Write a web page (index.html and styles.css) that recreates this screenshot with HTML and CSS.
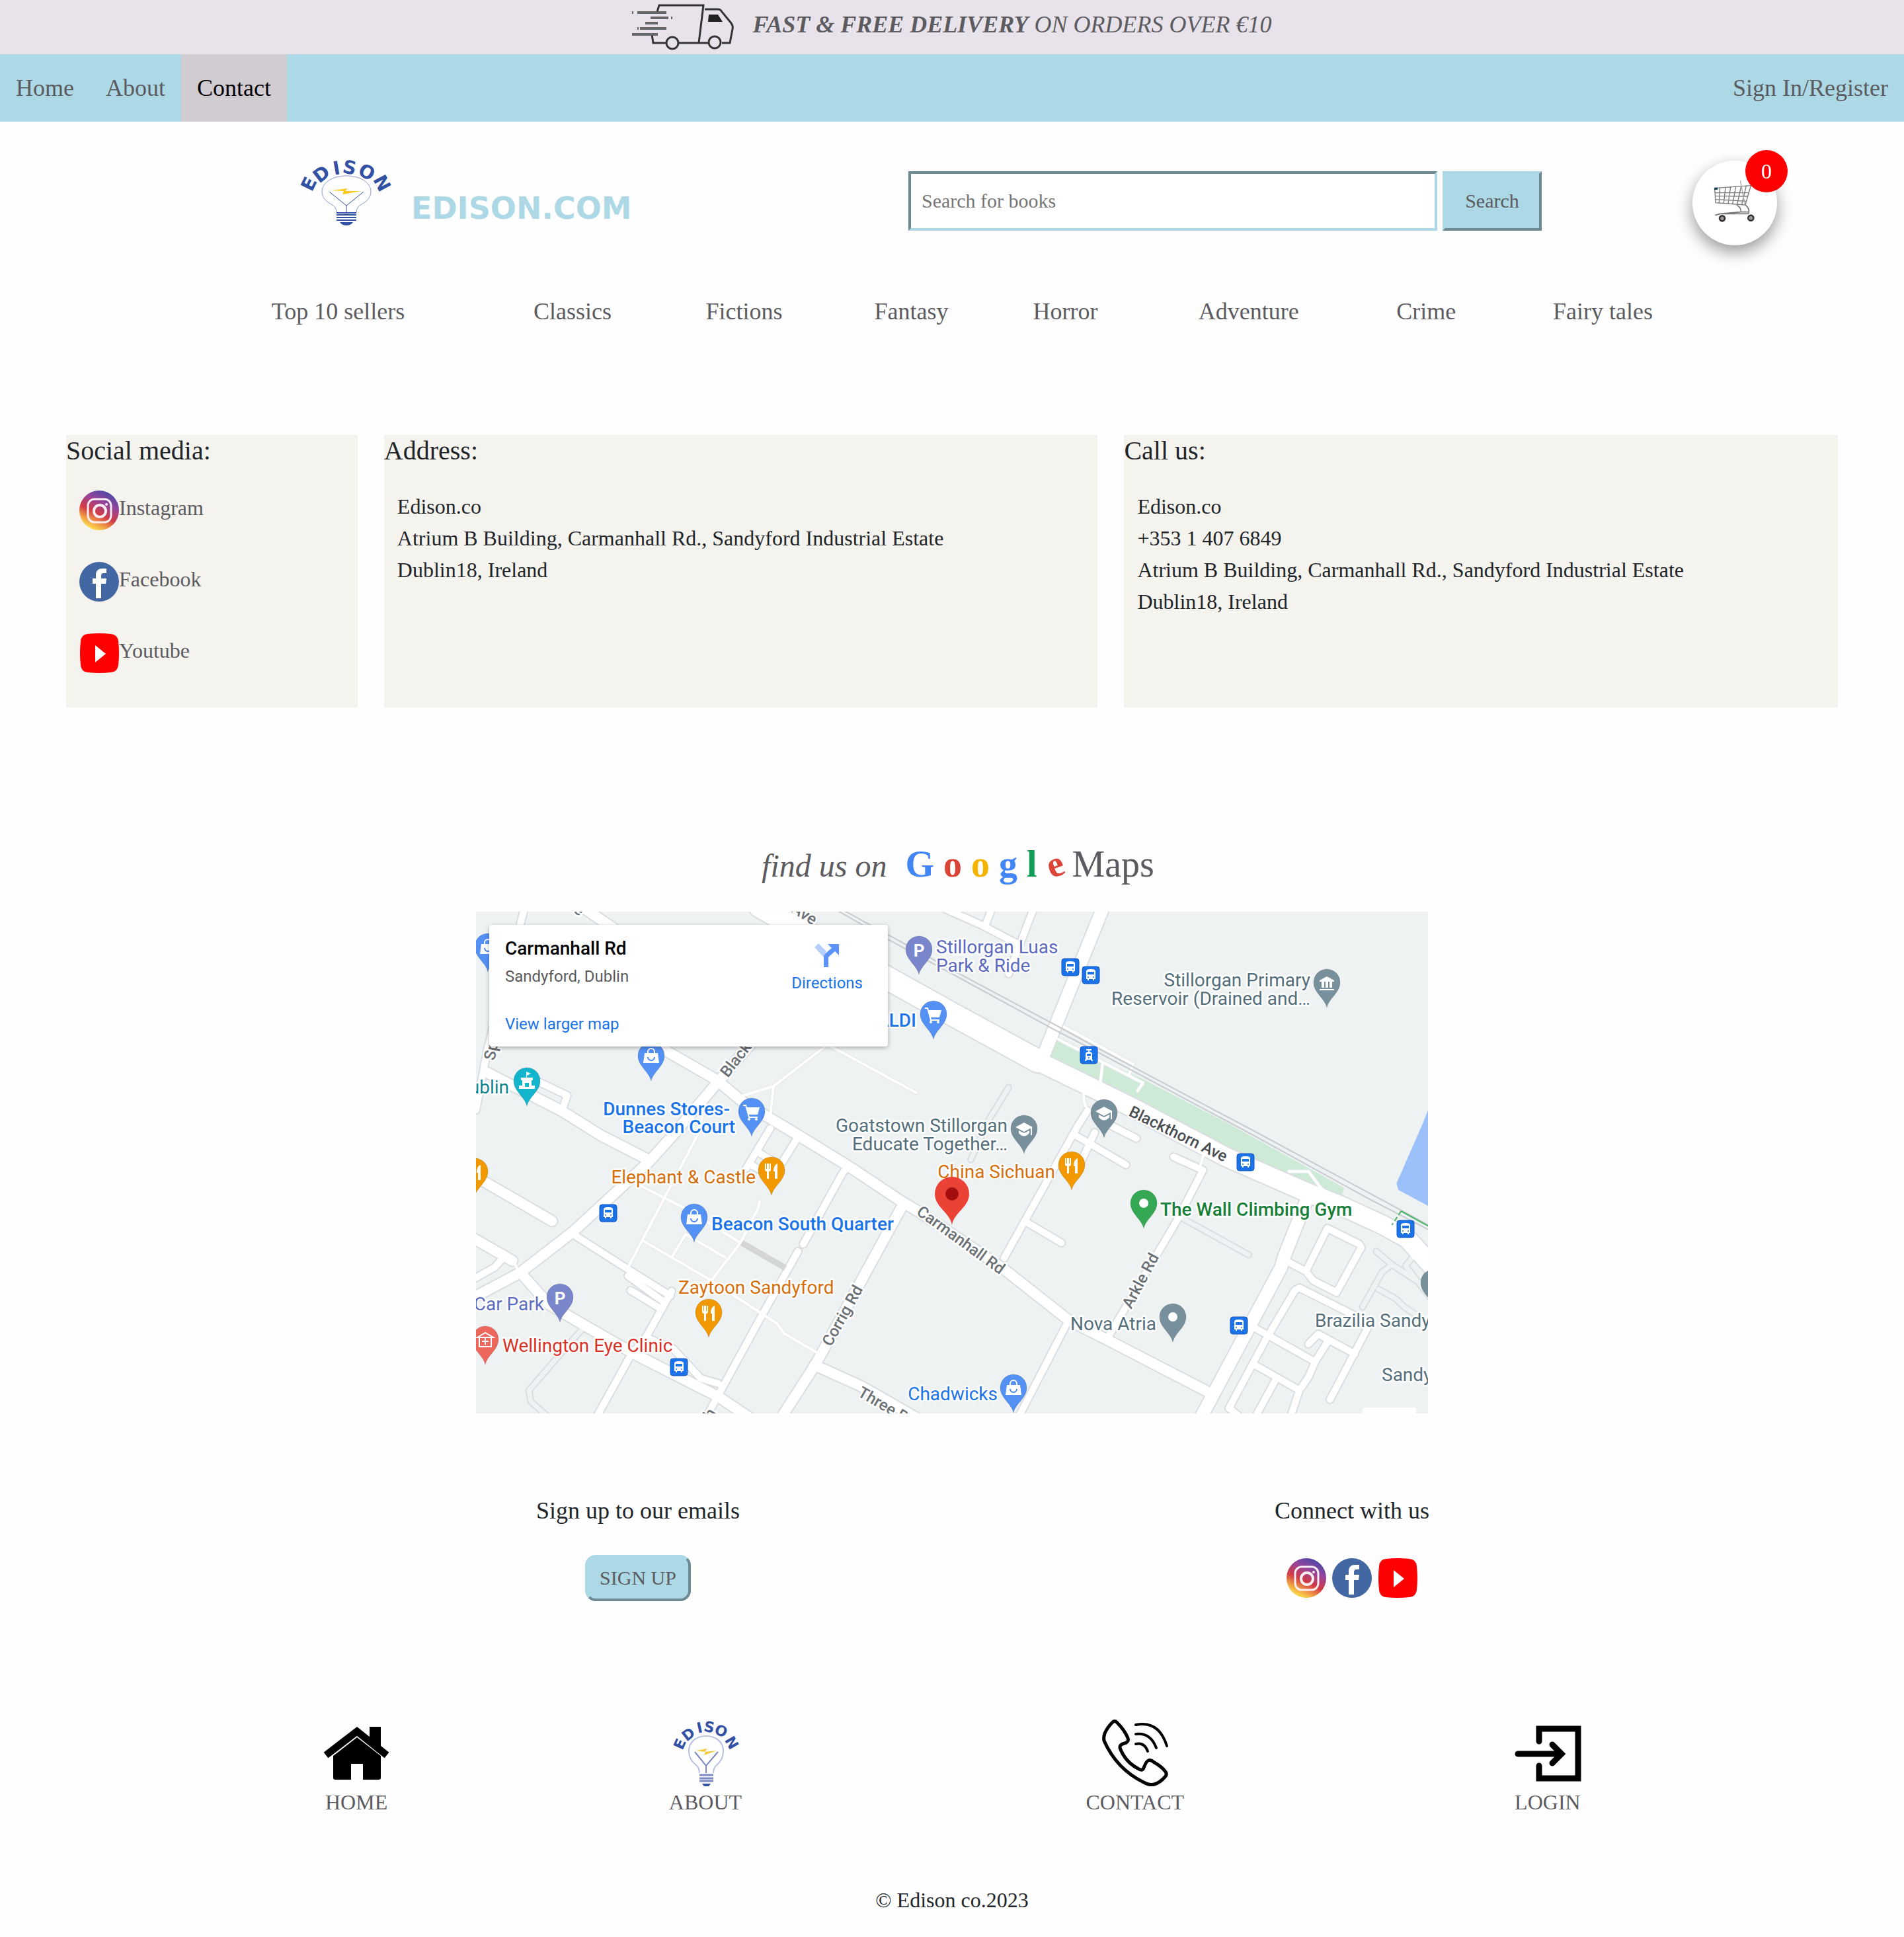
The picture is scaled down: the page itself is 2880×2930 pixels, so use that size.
FILE: index.html
```html
<!DOCTYPE html>
<html lang="en">
<head>
<meta charset="utf-8">
<meta name="viewport" content="width=device-width, initial-scale=1">
<title>Edison.com - Contact</title>
<link rel="stylesheet" href="styles.css">
</head>
<body>
<svg class="sprite" aria-hidden="true">
  <defs>
    <linearGradient id="ig-fill" x1="0.25" y1="1" x2="0.75" y2="0">
      <stop offset="0" stop-color="#fff04f"/>
      <stop offset="0.2" stop-color="#f3a545"/>
      <stop offset="0.42" stop-color="#d23a45"/>
      <stop offset="0.7" stop-color="#94459c"/>
      <stop offset="1" stop-color="#4148a8"/>
    </linearGradient>
    <symbol id="instagram" viewBox="0 0 60 60">
      <circle cx="30" cy="30" r="30" fill="url(#ig-fill)"/>
      <rect x="13" y="13" width="35" height="35" rx="10" fill="none" stroke="#fbeef2" stroke-width="3"/>
      <circle cx="31" cy="31" r="9" fill="none" stroke="#fbeef2" stroke-width="4"/>
      <circle cx="41" cy="21" r="2" fill="#fbeef2"/>
    </symbol>
    <symbol id="facebook" viewBox="0 0 60 60">
      <circle cx="30" cy="30" r="30" fill="#4267a3"/>
      <path d="M25 55V33H20V25H25V20C25 13 29 10 35 10H41V17H37C34 17 33 19 33 21V25H41L40 33H33V55Z" fill="#fff"/>
    </symbol>
    <symbol id="youtube" viewBox="0 0 60 60">
      <path d="M12 1Q30-1 48 1Q58 2 59 12Q61 30 59 48Q58 58 48 59Q30 61 12 59Q3 58 2 48Q0 30 2 12Q3 2 12 1Z" fill="#f00"/>
      <path d="M24 18L40 31L24 44Z" fill="#fff"/>
    </symbol>
    <symbol id="pin" viewBox="-20 -58 40 58" overflow="visible">
      <path d="M0 0C-3-14-20-22-20-38a20 20 0 0 1 40 0C20-22 3-14 0 0z" stroke="#00000022" stroke-width="1"/>
    </symbol>
    <g id="g-bag" fill="#fff"><path d="M-10-42H10L12-27H-12Z"/><path d="M-5-41v-3a5 5 0 0 1 10 0v3" fill="none" stroke="#fff" stroke-width="2"/><path d="M-5-36a5 5 0 0 0 10 0" fill="none" stroke="#4285f4" stroke-width="2"/></g>
    <g id="g-cart" fill="#fff"><path d="M-8-44H12L9-33H-5Z"/><path d="M-13-47H-9L-4-29H9" fill="none" stroke="#fff" stroke-width="2"/><circle cx="-4" cy="-26" r="2"/><circle cx="7" cy="-26" r="2"/></g>
    <g id="g-fork" fill="#fff"><path d="M-10-48V-39Q-10-36-7-36V-25H-4V-36Q-1-36-1-39V-48H-3V-40H-4V-48H-7V-40H-8V-48Z"/><path d="M9-48Q3-46 3-36H5V-25H9Z"/></g>
    <g id="g-school" fill="#fff"><path d="M0-47L13-40L0-33L-13-40Z"/><path d="M-8-35L0-31L8-35V-31Q0-22-8-31Z"/><path d="M10-40H12V-28H10Z"/></g>
    <g id="g-dot"><circle cy="-38" r="7" fill="#fff"/></g>
    <g id="g-castle" fill="#fff"><path d="M-9-43H9V-39H7V-31H12V-26H-12V-31H-7V-39H-9Z"/><path d="M-1-52L6-49L0-46V-43H-1Z"/><rect x="-3" y="-35" width="6" height="6" fill="#12b5cb"/></g>
    <g id="g-bank" fill="#fff"><path d="M0-47L11-41V-39H-11V-41Z"/><path d="M-8-39H-4V-30H-8ZM-2-39H2V-30H-2ZM4-39H8V-30H4Z"/><path d="M-11-28H11V-26H-11Z"/></g>
    <g id="g-clinic" fill="none" stroke="#fff" stroke-width="2"><path d="M-9-42V-27H9V-42M-12-41L0-48L12-41ZM-5-35H5M0-40V-30"/></g>
    <g id="bus">
      <rect width="26" height="26" rx="4" fill="#1a73e8" stroke="#1558c0" stroke-width="1"/>
      <path d="M6 7Q6 4 13 4Q20 4 20 7V19H18V21H16V19H10V21H8V19H6Z" fill="#fff"/>
      <path d="M8 8H18V12H8Z" fill="#1a73e8"/><circle cx="9" cy="16" r="1" fill="#1a73e8"/><circle cx="17" cy="16" r="1" fill="#1a73e8"/>
    </g>
    <g id="tram">
      <rect width="26" height="26" rx="4" fill="#1a73e8" stroke="#1558c0" stroke-width="1"/>
      <path d="M9 4H17V6H14V8Q18 8 18 12V19L19 22H17L16 20H10L9 22H7L8 19V12Q8 8 12 8V6H9Z" fill="#fff"/>
      <path d="M10 11H16V14H10Z" fill="#1a73e8"/><circle cx="13" cy="17" r="1" fill="#1a73e8"/>
    </g>
  </defs>
</svg>

<p class="promo">
  <svg class="promo-truck" viewBox="0 0 154 70" aria-hidden="true" fill="none" stroke="#333" stroke-width="3">
    <path d="M38 12L41 2H108L101 59M110 8H130Q134 8 136 12L150 29Q153 33 152 38L148 59H136M30 46L32 59H51M71 59H115"/>
    <circle cx="61" cy="59" r="9"/><circle cx="125" cy="58" r="9"/>
    <path d="M116 16H130L137 27H115Z" fill="#222" stroke="none"/>
    <path stroke="#666" stroke-width="4" d="M8 13H52M0 13H2M28 21H55M59 21H61M20 29H39M12 37H52M8 37H10M0 46H39"/>
  </svg>
  <em class="promo-text"><strong>FAST &amp; FREE DELIVERY</strong> ON ORDERS OVER €10</em>
</p>

<nav class="topnav" aria-label="Main">
  <a href="#">Home</a>
  <a href="#">About</a>
  <a href="#" class="active">Contact</a>
  <a href="#" class="signin">Sign In/Register</a>
</nav>

<header class="header">
  <a class="brand" href="#">
    <svg class="brand-bulb" viewBox="0 0 142 100" role="img" aria-label="Edison">
      <g class="arc-text arc-wide">
        <text transform="translate(15 35) rotate(-64)" y="10">E</text>
        <text transform="translate(34 20) rotate(-38)" y="10">D</text>
        <text transform="translate(57 11) rotate(-10)" y="10">I</text>
        <text transform="translate(77 10) rotate(12)" y="10">S</text>
        <text transform="translate(103 17) rotate(28)" y="10">O</text>
        <text transform="translate(126 34) rotate(62)" y="10">N</text>
      </g>
      <g fill="none" stroke="#3250a4">
        <path stroke="#8c99cc" d="M57 78Q57 70 49 66C40 61 35 55 35 47C35 33 51 23 72 23S109 33 109 47C109 55 104 61 95 66Q87 70 87 78"/>
        <path stroke-width="1" d="M46 47L72 68L98 47M72 68V78"/>
        <path stroke-width="2" d="M57 79H87M57 82H87M57 86H87M57 90H87"/>
      </g>
      <path d="M62 93H82Q79 98 72 98T62 93Z" fill="#3250a4"/>
      <path d="M49 45L74 42L70 46L94 46L66 51L68 46Z" fill="#ffcb12"/>
    </svg>
    <span class="brand-name">EDISON.COM</span>
  </a>
  <form class="search" action="#">
    <input type="search" name="q" placeholder="Search for books" aria-label="Search for books">
    <button type="button">Search</button>
  </form>
  <a class="cart" href="#" aria-label="Basket">
    <svg viewBox="90 87 384 384" aria-hidden="true" fill="none" stroke="#777" stroke-width="4">
      <path d="M191 212L355 200L330 288L195 278ZM192 233H345M193 247L341 249M194 263L337 271M214 211L211 278M240 209L232 281M263 207L252 282M287 206L272 283M311 204L293 285M334 202L314 286"/>
      <path stroke="#aaa" d="M307 178L329 290"/>
      <path d="M290 288Q312 300 310 320M330 288Q352 304 345 328M193 335L215 328H346M215 328L310 320H345" stroke-width="5"/>
      <rect x="190" y="209" width="14" height="10" fill="#123c55" stroke="none"/>
      <circle cx="225" cy="349" r="12" stroke="#3a3634" stroke-width="8" fill="#999"/>
      <circle cx="355" cy="347" r="12" stroke="#3a3634" stroke-width="8" fill="#999"/>
    </svg>
    <span class="cart-count">0</span>
  </a>
</header>

<nav aria-label="Categories">
  <ul class="spread categories">
    <li><a href="#">Top 10 sellers</a></li>
    <li><a href="#">Classics</a></li>
    <li><a href="#">Fictions</a></li>
    <li><a href="#">Fantasy</a></li>
    <li><a href="#">Horror</a></li>
    <li><a href="#">Adventure</a></li>
    <li><a href="#">Crime</a></li>
    <li><a href="#">Fairy tales</a></li>
  </ul>
</nav>

<main>
  <div class="cards">
    <section class="card">
      <h2>Social media:</h2>
      <ul class="social-list">
        <li><a href="#"><svg class="social-icon"><use href="#instagram"/></svg>Instagram</a></li>
        <li><a href="#"><svg class="social-icon"><use href="#facebook"/></svg>Facebook</a></li>
        <li><a href="#"><svg class="social-icon"><use href="#youtube"/></svg>Youtube</a></li>
      </ul>
    </section>
    <section class="card">
      <h2>Address:</h2>
      <address>Edison.co<br>Atrium B Building, Carmanhall Rd., Sandyford Industrial Estate<br>Dublin18, Ireland</address>
    </section>
    <section class="card">
      <h2>Call us:</h2>
      <address>Edison.co<br>+353 1 407 6849<br>Atrium B Building, Carmanhall Rd., Sandyford Industrial Estate<br>Dublin18, Ireland</address>
    </section>
  </div>

  <h2 class="map-title">
    <em>find us on</em>
    <span><b class="g-blue">G</b> <b class="g-red">o</b> <b class="g-yellow">o</b> <b class="g-blue">g</b> <b class="g-green">l</b> <b class="g-red g-tilt">e</b> Maps</span>
  </h2>

  <div class="map">
    <svg class="map-canvas" viewBox="0 0 1440 759" role="img" aria-label="Map of Carmanhall Rd, Sandyford">
      <defs>
        <g id="r-lane">
          <path d="M528 204L450 264L395 281M450 264L445 311M537 204L666 274M348 285L335 338L285 433L230 538M248 414L326 454L400 501M429 438L427 448L400 501L356 558M253 498L356 558L432 608L455 623L466 638L514 666M317 488L296 523M317 488L377 523M55 528L68 548"/>
          <path transform="translate(10 0) scale(0.986 1)" d="M1107 364L1101 385M883 193L1013 259L1005 271M951 231L947 264M892 174L998 231L991 248M1237 393L1267 393L1286 418L1305 431M920 262L923 288L928 301"/>
        </g>
        <g id="r-outline">
          <path d="M161 631L80 724L83 741L110 765"/>
          <path transform="translate(10 0) scale(0.986 1)" d="M1074 464L1175 519M807 266L777 314L749 375M1371 514L1395 534L1437 561M1395 534L1380 545L1350 598M1374 571L1400 585L1414 598L1440 615M1428 521L1416 536L1455 585"/>
        </g>
        <g id="r-small">
          <path d="M73-4L18 205L0 300M96 258L138 278L131 298M445 328L409 388M487 341L464 378M427 364L450 378M418 384L436 394M560 388L553 398L495 503M487 514L434 608L348 765M147 488L230 541L294 581M230 551L285 591M234 573L280 601M296 574L257 644L234 671L182 765M262 646L298 661L340 706L367 714M41 524L28 538L-4 556"/>
          <path transform="translate(10 0) scale(0.986 1)" d="M710-4L767 21L819 48M781-4L772 19M845-4L807 94M928 301L913 324L800 524M939 334L915 385M909 338L987 383M965 324L1003 343M833 469L888 501M1060 371L1105 391L1067 464L958 646M899 618L822 765M1232 528L1263 544L1274 558L1310 576L1348 508L1345 503L1296 479L1263 544M1338 611L1253 569L1246 573L1201 648L1145 751L1160 763M1182 628L1277 681M1182 684L1253 724M1296 651L1277 681L1267 704L1253 724L1239 765M1215 711L1185 765M1267 654L1282 639L1338 669M1338 611L1357 631L1300 738"/>
        </g>
        <g id="r-medium">
          <path d="M165-4L215 30M240 180L285 209L363 254L404 288L487 338L565 386L643 438L668 453M420 195L363 261L298 338L262 378L147 484L67 546L-4 584M18 244L129 301L188 338L262 376M647 441L514 684L462 765M512 686L583 718L665 765M69 548L110 594L161 624L243 671L367 734L413 765M-4 494L55 528M5 404L115 468"/>
          <path transform="translate(10 0) scale(0.986 1)" d="M668 453L800 541L899 618L961 649L1112 726"/>
        </g>
        <path id="r-large" transform="translate(10 0) scale(0.986 1)" d="M951-4L862 214M1265 434L1230 521L1225 538L1102 765"/>
        <path id="r-avenue" transform="translate(10 0) scale(0.986 1)" d="M843 222L918 258L1000 298L1140 371L1263 424L1315 444L1381 474L1418 494L1465 545"/>
        <path id="r-avenue-wide" d="M430-8L623 101L720 155L850 226"/>
      </defs>
      <rect width="1440" height="759" fill="#eef2f3"/>
      <g transform="translate(10 0) scale(0.986 1)">
        <path fill="#cdead6" d="M880 193L1008 251L1145 321L1322 418L1315 440L1150 361L947 268L866 218Z"/>
        <path fill="#9cc0fa" d="M1452 296L1442 321L1402 411L1405 421L1452 446Z"/>
      </g>
      <g class="roads" stroke="#dadde1">
        <use href="#r-outline" stroke-width="11"/>
        <use href="#r-lane" stroke-width="6" stroke="#e6e8ea"/>
        <use href="#r-small" stroke-width="14"/>
        <use href="#r-medium" stroke-width="19"/>
        <use href="#r-large" stroke-width="23"/>
        <use href="#r-avenue" stroke-width="32"/>
        <use href="#r-avenue-wide" stroke-width="38"/>
      </g>
      <g class="roads" stroke="#fff">
        <use href="#r-outline" stroke-width="7" stroke="#eef2f3"/>
        <use href="#r-lane" stroke-width="4"/>
        <use href="#r-small" stroke-width="10"/>
        <use href="#r-medium" stroke-width="15"/>
        <use href="#r-large" stroke-width="19"/>
        <use href="#r-avenue" stroke-width="28"/>
        <use href="#r-avenue-wide" stroke-width="34"/>
      </g>
      <path d="M402 501L468 539" stroke="#d3d5d7" stroke-width="9"/>
      <path d="M546-2L623 42L720 94M556-2L720 88" fill="none" stroke="#c8ccd0" stroke-width="2"/>
      <g transform="translate(10 0) scale(0.986 1)" fill="none" stroke-width="2">
        <path d="M720 94L876 178L937 209L1182 338L1357 433L1455 483M720 88L876 170L937 203L1182 331L1357 424L1455 476" stroke="#c8ccd0"/>
        <path d="M1409 453L1455 478" stroke="#4bb466"/>
        <path d="M1409 453L1395 474" stroke="#4bb466" stroke-dasharray="7 4"/>
      </g>

      <g class="street">
        <text transform="translate(460 -10) rotate(32)">s Ave</text>
        <text transform="translate(146 0) rotate(34)">e</text>
        <text transform="translate(28 226) rotate(-78)">Spru</text>
        <text transform="translate(381 252) rotate(-52)">Blackt</text>
        <text transform="translate(986 308) rotate(26)" class="street-main">Blackthorn Ave</text>
        <text transform="translate(665 457) rotate(36)">Carmanhall Rd</text>
        <text transform="translate(537 659) rotate(-61)">Corrig Rd</text>
        <text transform="translate(991 602) rotate(-62)">Arkle Rd</text>
        <text transform="translate(576 732) rotate(30)">Three Rock</text>
        <text transform="translate(350 782) rotate(-60)">Th</text>
      </g>

      <g fill="#5491f5">
        <g transform="translate(18 91)"><use href="#pin" x="-20" y="-58" width="40" height="58"/><use href="#g-bag"/></g>
        <g transform="translate(692 193)"><use href="#pin" x="-20" y="-58" width="40" height="58"/><use href="#g-cart"/></g>
        <g transform="translate(265 256)"><use href="#pin" x="-20" y="-58" width="40" height="58"/><use href="#g-bag"/></g>
        <g transform="translate(417 340)"><use href="#pin" x="-20" y="-58" width="40" height="58"/><use href="#g-cart"/></g>
        <g transform="translate(330 500)"><use href="#pin" x="-20" y="-58" width="40" height="58"/><use href="#g-bag"/></g>
        <g transform="translate(813 758)"><use href="#pin" x="-20" y="-58" width="40" height="58"/><use href="#g-bag"/></g>
      </g>
      <g fill="#7986cb">
        <g transform="translate(670 95)"><use href="#pin" x="-20" y="-58" width="40" height="58"/><text class="pin-letter" y="-27">P</text></g>
        <g transform="translate(127 621)"><use href="#pin" x="-20" y="-58" width="40" height="58"/><text class="pin-letter" y="-27">P</text></g>
      </g>
      <g fill="#12b5cb" transform="translate(77 294)"><use href="#pin" x="-20" y="-58" width="40" height="58"/><use href="#g-castle"/></g>
      <g fill="#f29900">
        <g transform="translate(447 429)"><use href="#pin" x="-20" y="-58" width="40" height="58"/><use href="#g-fork"/></g>
        <g transform="translate(-2 431)"><use href="#pin" x="-20" y="-58" width="40" height="58"/><use href="#g-fork"/></g>
        <g transform="translate(352 644)"><use href="#pin" x="-20" y="-58" width="40" height="58"/><use href="#g-fork"/></g>
        <g transform="translate(901 421)"><use href="#pin" x="-20" y="-58" width="40" height="58"/><use href="#g-fork"/></g>
      </g>
      <g fill="#ee675c" transform="translate(14 685)"><use href="#pin" x="-20" y="-58" width="40" height="58"/><use href="#g-clinic"/></g>
      <g fill="#34a853" transform="translate(1010 479)"><use href="#pin" x="-20" y="-58" width="40" height="58"/><use href="#g-dot"/></g>
      <g fill="#78909c">
        <g transform="translate(1287 145)"><use href="#pin" x="-20" y="-58" width="40" height="58"/><use href="#g-bank"/></g>
        <g transform="translate(829 366)"><use href="#pin" x="-20" y="-58" width="40" height="58"/><use href="#g-school"/></g>
        <g transform="translate(950 342)"><use href="#pin" x="-20" y="-58" width="40" height="58"/><use href="#g-school"/></g>
        <g transform="translate(1054 651)"><use href="#pin" x="-20" y="-58" width="40" height="58"/><use href="#g-dot"/></g>
        <g transform="translate(1449 599)"><use href="#pin" x="-20" y="-58" width="40" height="58"/></g>
      </g>

      <use href="#bus" x="886" y="71"/><use href="#bus" x="917" y="83"/><use href="#tram" x="914" y="204"/>
      <use href="#bus" x="1151" y="366"/><use href="#bus" x="1393" y="467"/><use href="#bus" x="1141" y="613"/>
      <use href="#bus" x="187" y="443"/><use href="#bus" x="294" y="676"/>

      <g class="place">
        <g fill="#5c6bc0"><text x="696" y="63">Stillorgan Luas</text><text x="696" y="91">Park &amp; Ride</text><text x="103" y="603" class="end">Car Park</text></g>
        <g fill="#1a73e8">
          <g class="strong"><text x="666" y="174" class="end">ALDI</text><text x="384" y="308" class="end">Dunnes Stores-</text><text x="392" y="335" class="end">Beacon Court</text><text x="356" y="482">Beacon South Quarter</text></g>
          <text x="789" y="739" class="end">Chadwicks</text>
        </g>
        <text x="50" y="275" class="end" fill="#12858f">Dublin</text>
        <g fill="#d56e0c"><text x="423" y="411" class="end">Elephant &amp; Castle</text><text x="306" y="578">Zaytoon Sandyford</text><text x="876" y="403" class="end">China Sichuan</text></g>
        <text x="40" y="666" fill="#d93025">Wellington Eye Clinic</text>
        <g fill="#546e7a">
          <text x="804" y="333" class="end">Goatstown Stillorgan</text><text x="804" y="361" class="end">Educate Together…</text>
          <text x="1262" y="113" class="end">Stillorgan Primary</text><text x="1262" y="141" class="end">Reservoir (Drained and…</text>
          <text x="1029" y="633" class="end">Nova Atria</text>
          <text x="1269" y="628">Brazilia Sandyford</text><text x="1370" y="710">Sandyford</text>
        </g>
        <text x="1035" y="460" class="strong" fill="#188038">The Wall Climbing Gym</text>
      </g>
      <path fill="#ea4335" d="M720 474C717 455 694 447 694 427a26 26 0 0 1 52 0C746 447 723 455 720 474z"/>
      <circle cx="720" cy="427" r="10" fill="#a50e0e"/>
      <rect x="1341" y="750" width="81" height="30" rx="4" fill="#fff"/>
    </svg>
    <div class="place-card">
      <div class="place-info">
        <strong>Carmanhall Rd</strong>
        <span>Sandyford, Dublin</span>
        <a href="#">View larger map</a>
      </div>
      <a class="directions" href="#">
        <svg viewBox="0 0 38 36" aria-hidden="true"><path d="M0 6L6 0L18 12L14 21Z" fill="#b5cefb"/><path d="M14 36V22Q14 17 18 14L26 7L20 1H37V18L31 12L23 19Q21 20 21 23V36Z" fill="#5b93fa"/></svg>
        Directions
      </a>
    </div>
  </div>

  <div class="join">
    <section>
      <h3>Sign up to our emails</h3>
      <div class="join-row"><button type="button">SIGN UP</button></div>
    </section>
    <section>
      <h3>Connect with us</h3>
      <div class="join-row">
        <a href="#" aria-label="Instagram"><svg class="social-icon"><use href="#instagram"/></svg></a>
        <a href="#" aria-label="Facebook"><svg class="social-icon"><use href="#facebook"/></svg></a>
        <a href="#" aria-label="Youtube"><svg class="social-icon"><use href="#youtube"/></svg></a>
      </div>
    </section>
  </div>
</main>

<footer>
  <ul class="spread footer-links">
    <li><a href="#">
      <svg viewBox="0 0 100 100" aria-hidden="true"><path d="M15 54L51 26L87 54V87Q87 90 84 90H60V66H42V90H18Q15 90 15 87Z"/><path d="M4 53L51 17L96 53" fill="none" stroke="#000" stroke-width="11"/><path d="M70 10H87V46L70 32Z"/></svg>
      HOME</a></li>
    <li><a href="#">
      <svg viewBox="0 0 100 100" aria-hidden="true">
        <g class="arc-text arc-small">
          <text transform="translate(11 36) rotate(-66)" y="8">E</text>
          <text transform="translate(24 21) rotate(-38)" y="8">D</text>
          <text transform="translate(41 11) rotate(-12)" y="8">I</text>
          <text transform="translate(56 10) rotate(12)" y="8">S</text>
          <text transform="translate(74 16) rotate(26)" y="8">O</text>
          <text transform="translate(90 34) rotate(60)" y="8">N</text>
        </g>
        <g fill="none" stroke="#7c89c4" stroke-width="2">
          <path stroke="#b9c1e2" d="M41 80Q41 72 36 68C28 62 25 55 25 47C25 32 37 24 51 24S77 32 77 47C77 55 74 62 67 68Q62 72 62 80"/>
          <path d="M34 48L51 69L69 48M51 69V80"/>
          <path stroke-width="3" d="M41 83H62M41 88H62M41 92H62"/>
        </g>
        <path d="M45 96H58L55 100H48Z" fill="#3250a4"/>
        <path d="M36 46L53 43L49 48L67 46L48 53L50 48Z" fill="#f2c83c"/>
      </svg>
      ABOUT</a></li>
    <li><a href="#">
      <svg viewBox="0 0 100 100" aria-hidden="true" fill="none" stroke="#000" stroke-width="5" stroke-linecap="round" stroke-linejoin="round"><path d="M15 4Q19-1 23 4Q34 15 39 27Q41 33 34 35Q26 37 27 42Q35 63 54 73Q61 78 63 72Q67 62 70 61Q73 59 79 64Q90 70 96 78Q99 82 95 86Q87 95 79 97Q72 99 63 94Q22 74 3 31Q2 26 4 20Q8 11 15 4Z"/><path d="M51 36Q64 33 69 47M51 21Q73 18 82 42M51 7Q86 0 98 39" stroke-width="4"/></svg>
      CONTACT</a></li>
    <li><a href="#">
      <svg viewBox="0 0 100 100" aria-hidden="true" fill="none" stroke="#000" stroke-width="10" stroke-linecap="round"><path d="M37 32V13H96V88H37V69M5 51H70M57 37L71 51L57 65" stroke-width="9"/></svg>
      LOGIN</a></li>
  </ul>
  <p class="copyright">© Edison co.2023</p>
</footer>
</body>
</html>
```
FILE: styles.css
```css
* {
  box-sizing: border-box;
}

body {
  margin: 0;
  background: #fefefe;
  color: #212529;
  font-family: "Liberation Serif", "Times New Roman", serif;
  font-size: 32px;
  line-height: 48px;
}

a {
  color: #5c5b5f;
  text-decoration: none;
}

svg {
  display: block;
}

ul,
p,
h2,
h3 {
  margin: 0;
  padding: 0;
  font-weight: 400;
  list-style: none;
}

.sprite {
  position: absolute;
  width: 0;
  height: 0;
}

/* Delivery banner */
.promo {
  display: flex;
  justify-content: center;
  gap: 28px;
  padding: 6px 0;
  background: #e8e3ea;
  color: #5c5b5f;
  font-size: 36px;
  line-height: 54px;
}

.promo-truck {
  width: 154px;
  height: 70px;
}

.promo-text {
  padding-top: 4px;
}

/* Top navigation */
.topnav {
  display: flex;
  background: #add8e5;
  font-size: 36px;
  line-height: 54px;
}

.topnav a {
  padding: 24px;
}

.topnav .active {
  background: #d1cbd2;
  color: #000;
}

.topnav .signin {
  margin-left: auto;
}

/* Logo, search and basket */
.header {
  display: grid;
  grid-template-columns: 452fr 922fr 1186fr 320fr;
  align-items: start;
  padding: 59px 0 73px;
}

.brand {
  grid-column: 2;
  display: flex;
  gap: 28px;
}

.brand-bulb {
  width: 142px;
  height: 100px;
  overflow: visible;
}

.brand-name {
  padding-top: 48px;
  color: #add8e5;
  font-family: "DejaVu Sans", sans-serif;
  font-size: 46px;
  font-weight: 700;
}

.arc-text {
  fill: #3250a4;
  font-family: "DejaVu Sans", sans-serif;
  font-weight: 700;
  text-anchor: middle;
}

.arc-wide {
  font-size: 28px;
}

.arc-small {
  font-size: 22px;
}

.search {
  display: flex;
  gap: 8px;
  padding-top: 16px;
}

.search input,
.search button {
  height: 90px;
  border: 4px inset #add8e5;
  border-radius: 0;
  font: inherit;
  font-size: 30px;
}

.search input {
  width: 800px;
  padding: 0 16px;
  background: #fff;
  appearance: none;
}

.search input::placeholder {
  color: #757575;
}

.search button {
  width: 150px;
  padding: 0;
  border-style: outset;
  background: #add8e5;
  color: #5c5b5f;
}

.cart {
  position: relative;
  width: 128px;
  height: 128px;
  border-radius: 50%;
  background: #fff;
  box-shadow: 0 10px 24px rgba(0, 0, 0, 0.4);
}

.cart-count {
  position: absolute;
  top: -16px;
  right: -16px;
  width: 64px;
  border-radius: 50%;
  background: #f00;
  color: #fff;
  line-height: 64px;
  text-align: center;
}

/* Lists whose columns share the row in proportion to their text */
.spread {
  display: table;
  width: 80%;
  margin: 0 auto;
  text-align: center;
}

.spread li {
  display: table-cell;
}

.categories {
  font-size: 36px;
  line-height: 54px;
}

/* Contact cards */
.cards {
  display: grid;
  grid-template-columns: 49fr 120fr 120fr;
  gap: 40px;
  margin: 160px 100px 0;
}

.card {
  padding-bottom: 52px;
  background: #f4f3ee;
}

.card h2 {
  font-size: 40px;
}

.card address,
.social-list {
  padding: 36px 20px 0;
  font-style: normal;
}

.social-list {
  display: grid;
  gap: 48px;
}

.social-list a {
  display: flex;
  line-height: 52px;
}

.social-icon {
  width: 60px;
  height: 60px;
}

/* Map */
.map-title {
  display: flex;
  justify-content: center;
  align-items: baseline;
  gap: 28px;
  margin: 195px 0 27px;
  padding-left: 18px;
  color: #5c5b5f;
  font-size: 56px;
  line-height: 84px;
}

.map-title em {
  font-size: 48px;
}

.g-blue {
  color: #4285f4;
}

.g-red {
  color: #db4437;
}

.g-yellow {
  color: #f4b400;
}

.g-green {
  color: #0f9d58;
}

.g-tilt {
  display: inline-block;
  transform: rotate(-20deg);
}

.map {
  position: relative;
  width: 50%;
  margin: 0 auto;
  font-family: Roboto, sans-serif;
}

.map-canvas {
  width: 100%;
  height: auto;
}

.roads {
  fill: none;
  stroke-linecap: round;
  stroke-linejoin: round;
}

.street,
.place {
  paint-order: stroke;
  stroke: #fff;
  stroke-width: 5px;
  stroke-linejoin: round;
}

.street {
  fill: #6b7075;
  font-size: 24px;
  font-weight: 500;
}

.street-main {
  fill: #4a4e52;
}

.place {
  font-size: 28px;
}

.strong {
  font-weight: 500;
}

.end {
  text-anchor: end;
}

.pin-letter {
  fill: #fff;
  font-size: 26px;
  font-weight: 700;
  text-anchor: middle;
}

.place-card {
  position: absolute;
  top: 20px;
  left: 20px;
  display: flex;
  justify-content: space-between;
  width: 603px;
  height: 184px;
  padding: 20px 38px 0 24px;
  border-radius: 4px;
  background: #fff;
  box-shadow: 0 2px 6px rgba(0, 0, 0, 0.3);
  font-size: 24px;
  line-height: 32px;
}

.place-info {
  display: flex;
  flex-direction: column;
  color: #5b5b5b;
}

.place-info strong {
  color: #000;
  font-size: 28px;
  font-weight: 500;
}

.place-info span {
  padding: 10px 0 40px;
}

.place-card a {
  color: #1a73e8;
}

.directions {
  display: flex;
  flex-direction: column;
  align-items: center;
  gap: 8px;
  padding-top: 8px;
}

.directions svg {
  width: 38px;
  height: 36px;
}

/* Sign up and social links */
.join {
  display: grid;
  grid-template-columns: 1fr 1fr;
  margin-top: 120px;
  padding: 0 295px 0 425px;
  text-align: center;
}

.join h3 {
  margin-bottom: 40px;
  font-size: 36px;
  line-height: 54px;
}

.join-row {
  display: flex;
  justify-content: center;
  align-items: center;
  gap: 9px;
  height: 70px;
}

.join button {
  width: 160px;
  height: 70px;
  padding: 0;
  border: 4px outset #add8e5;
  border-radius: 16px;
  background: #add8e5;
  color: #5c5b5f;
  font: inherit;
  font-size: 30px;
}

/* Footer */
.footer-links {
  margin-top: 180px;
}

.footer-links a {
  display: flex;
  flex-direction: column;
  align-items: center;
}

.footer-links svg {
  width: 100px;
  height: 100px;
  overflow: visible;
}

.copyright {
  padding: 100px 0 32px;
  text-align: center;
}
```
